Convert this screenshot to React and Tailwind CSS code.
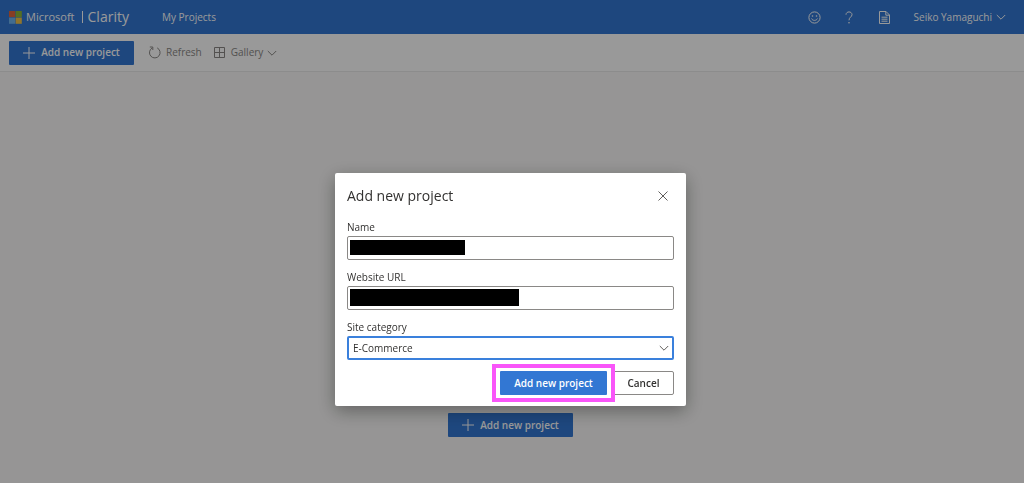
import React from "react";

function Stroke({ d, size = 12, width = 1, className = "" }) {
  return (
    <svg
      width={size}
      height={size}
      viewBox={`0 0 ${size} ${size}`}
      fill="none"
      stroke="currentColor"
      strokeWidth={width}
      className={`shrink-0 ${className}`}
      aria-hidden="true"
    >
      <path d={d} />
    </svg>
  );
}

const CHEVRON = "M1.8 4 L6 8.2 L10.2 4";
const PLUS = "M6 0 V12 M0 6 H12";

function MicrosoftLogo() {
  return (
    <svg width="13" height="13" viewBox="0 0 13 13" className="shrink-0" aria-hidden="true">
      <rect width="6.2" height="6.2" fill="#e2663f" />
      <rect x="6.6" width="6.2" height="6.2" fill="#8fba3a" />
      <rect y="6.6" width="6.2" height="6.2" fill="#6fb4ee" />
      <rect x="6.6" y="6.6" width="6.2" height="6.2" fill="#f2c44a" />
    </svg>
  );
}

function Header() {
  return (
    <header className="flex h-[34px] items-center bg-[#3277d3] pr-[17px] pl-[9px] text-white">
      <MicrosoftLogo />
      <span className="ml-1 text-[11px]">Microsoft</span>
      <span className="ml-[7px] h-3 w-px bg-white" />
      <span className="ml-[5px] text-[14px] leading-4 font-medium">Clarity</span>
      <a href="#projects" className="ml-[33px] text-[10px]">My Projects</a>
      <div className="ml-auto flex items-center">
        <button type="button" aria-label="Feedback">
          <svg width="13" height="13" viewBox="0 0 13 13" fill="none" stroke="currentColor" aria-hidden="true">
            <circle cx="6.5" cy="6.5" r="5.6" />
            <path d="M3.6 7.5 C4.4 10 8.6 10 9.4 7.5" />
            <circle cx="4.5" cy="5" r="0.8" fill="currentColor" stroke="none" />
            <circle cx="8.5" cy="5" r="0.8" fill="currentColor" stroke="none" />
          </svg>
        </button>
        <button type="button" aria-label="Help" className="ml-6">
          <svg width="8" height="13" viewBox="0 0 8 13" fill="none" stroke="currentColor" aria-hidden="true">
            <path d="M1 3.7 C1 0 7 0 7 3.7 C7 6 4 6 4 9.3" />
            <circle cx="4" cy="11.7" r="0.8" fill="currentColor" stroke="none" />
          </svg>
        </button>
        <button type="button" aria-label="Documentation" className="ml-[26px]">
          <svg width="11" height="13" viewBox="0 0 11 13" fill="none" stroke="currentColor" aria-hidden="true">
            <path d="M0.5 0.5 H7 L10.5 4 V12.5 H0.5 Z M6.8 0.5 V4.2 H10.5" />
            <path d="M2.5 6.2 H8.5 M2.5 8.2 H8.5 M2.5 10.2 H8.5" />
          </svg>
        </button>
        <button type="button" className="ml-6 flex items-center gap-[3px] text-[10px]">
          Seiko Yamaguchi
          <Stroke d={CHEVRON} />
        </button>
      </div>
    </header>
  );
}

function AddButton() {
  return (
    <button
      type="button"
      className="flex h-6 w-[125px] items-center justify-center gap-[6px] rounded-[1px] bg-[#3277d3] text-[10px] font-semibold whitespace-nowrap text-white"
    >
      <Stroke d={PLUS} />
      Add new project
    </button>
  );
}

function Toolbar() {
  return (
    <div className="flex h-[38px] items-center border-b border-[#eaeaea] bg-white pl-[9px] text-[10px] text-[#8a8886]">
      <AddButton />
      <button type="button" className="ml-[15px] flex items-center gap-[5px]">
        <svg width="12" height="13" viewBox="0 0 12 13" fill="none" stroke="currentColor" aria-hidden="true">
          <path d="M8.2 1.9 A5.3 5.3 0 1 1 3 2.1 M0.8 1 H3.8 V4" />
        </svg>
        Refresh
      </button>
      <button type="button" className="ml-3 flex items-center">
        <Stroke d="M0.5 0.5 H10.5 V10.5 H0.5 Z M5.5 0.5 V10.5 M0.5 5.5 H10.5" size={11} />
        <span className="ml-[6px]">Gallery</span>
        <Stroke d={CHEVRON} className="ml-[3px]" />
      </button>
    </div>
  );
}

function TextField({ id, label, children }) {
  return (
    <div>
      <label htmlFor={id} className="block text-[10px] leading-4">{label}</label>
      <div className="relative mt-px">
        <input
          id={id}
          type="text"
          className="block h-6 w-full rounded-[2px] border border-[#8a8886] bg-white px-[6px] outline-none"
        />
        {children}
      </div>
    </div>
  );
}

function ProjectDialog() {
  return (
    <div className="fixed inset-0 flex items-start justify-center bg-black/40 pt-[173px] pr-[3px]">
      <form
        role="dialog"
        aria-modal="true"
        aria-labelledby="dialog-title"
        className="w-[351px] rounded-[2px] bg-white px-3 pt-3 pb-[11px] text-[#323130] shadow-[0_5px_18px_rgba(0,0,0,0.35)]"
      >
        <div className="flex h-[22px] items-center justify-between pr-[6px]">
          <h1 id="dialog-title" className="text-[14px] leading-5">Add new project</h1>
          <button type="button" aria-label="Close" className="text-[#605e5c]">
            <Stroke d="M0.5 0.5 L9.5 9.5 M9.5 0.5 L0.5 9.5" size={10} />
          </button>
        </div>
        <div className="mt-3 flex flex-col gap-[9px]">
          <TextField id="name" label="Name">
            <span className="absolute top-1 left-[3px] h-[15px] w-[115px] bg-black" />
          </TextField>
          <TextField id="url" label="Website URL">
            <span className="absolute top-[3px] left-[3px] h-[17px] w-[169px] bg-black" />
          </TextField>
          <div>
            <label htmlFor="category" className="block text-[10px] leading-4">Site category</label>
            <div className="relative mt-px">
              <select
                id="category"
                className="block h-6 w-full appearance-none rounded-[2px] border-2 border-[#3a80dc] bg-white px-1 text-[10px] outline-none"
              >
                <option>E-Commerce</option>
              </select>
              <Stroke d={CHEVRON} className="pointer-events-none absolute top-[6px] right-1 text-[#605e5c]" />
            </div>
          </div>
        </div>
        <div className="mt-[11px] flex justify-end gap-[6px] text-[10px] font-semibold">
          <div className="relative z-10">
            <button type="button" className="block h-6 w-[107px] rounded-[1px] bg-[#3277d3] whitespace-nowrap text-white">
              Add new project
            </button>
            <span className="pointer-events-none absolute -inset-x-2 -inset-y-[7px] border-4 border-[#f955f9]" />
          </div>
          <button type="button" className="h-6 w-[61px] rounded-[2px] border border-[#8a8886] bg-white">
            Cancel
          </button>
        </div>
      </form>
    </div>
  );
}

export default function App() {
  return (
    <div className="flex min-h-screen flex-col bg-[#faf9f8] font-['Open_Sans','Noto_Sans',sans-serif]">
      <Header />
      <Toolbar />
      <main className="flex flex-1 justify-center pt-[341px] pr-[3px] pb-[46px]">
        <AddButton />
      </main>
      <ProjectDialog />
    </div>
  );
}
